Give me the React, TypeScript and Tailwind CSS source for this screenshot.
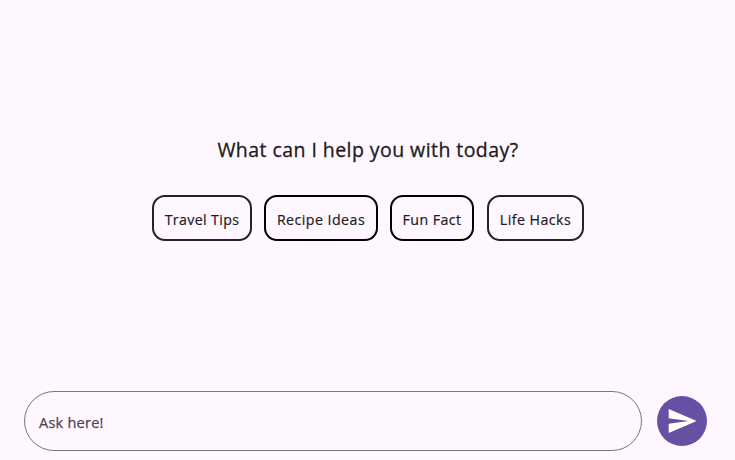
import { MdSend } from "react-icons/md";

const suggestions = [
  { label: "Travel Tips", style: "w-[100px] border-[#232127]", text: "tracking-[0.36px]" },
  { label: "Recipe Ideas", style: "w-[114px] border-black", text: "tracking-[0.46px]" },
  { label: "Fun Fact", style: "w-[84px] border-black", text: "tracking-[0.42px]" },
  { label: "Life Hacks", style: "ml-px w-[97px] border-[#232127]", text: "tracking-[0.46px]" },
];

export default function App() {
  return (
    <div className="flex h-[460px] w-[735px] flex-col overflow-hidden bg-[#fef7ff] font-['Open_Sans',sans-serif] text-[#1d1b20]">
      <main className="flex flex-1 flex-col items-center pt-[135px]">
        <h1 className="h-[30px] pl-px text-[19.5px] leading-[30px] font-medium tracking-[0.44px] whitespace-nowrap [-webkit-text-stroke:0.3px]">
          What can I help you with today?
        </h1>
        <div className="mt-[30px] flex gap-[12px] pl-px">
          {suggestions.map((s) => (
            <button
              key={s.label}
              className={`flex h-[46px] items-center justify-center rounded-[13px] border-2 pt-[4px] text-[14.2px] leading-5 font-medium whitespace-nowrap [-webkit-text-stroke:0.2px] ${s.style}`}
            >
              <span className={s.text}>{s.label}</span>
            </button>
          ))}
        </div>
      </main>
      <form className="flex items-center gap-[15px] pr-[28px] pb-[9px] pl-[24px]">
        <div className="flex h-[60px] flex-1 items-center rounded-full border border-[#79747e] pt-[4px] pl-[14px] text-[14.5px] font-medium text-[#49454f] [-webkit-text-stroke:0.25px]">
          <span className="tracking-[0.25px]">Ask here!</span>
        </div>
        <button
          type="button"
          aria-label="Send"
          className="flex size-[50px] items-center justify-center rounded-full bg-[#6750a4] text-white"
        >
          <MdSend size={32} />
        </button>
      </form>
    </div>
  );
}
